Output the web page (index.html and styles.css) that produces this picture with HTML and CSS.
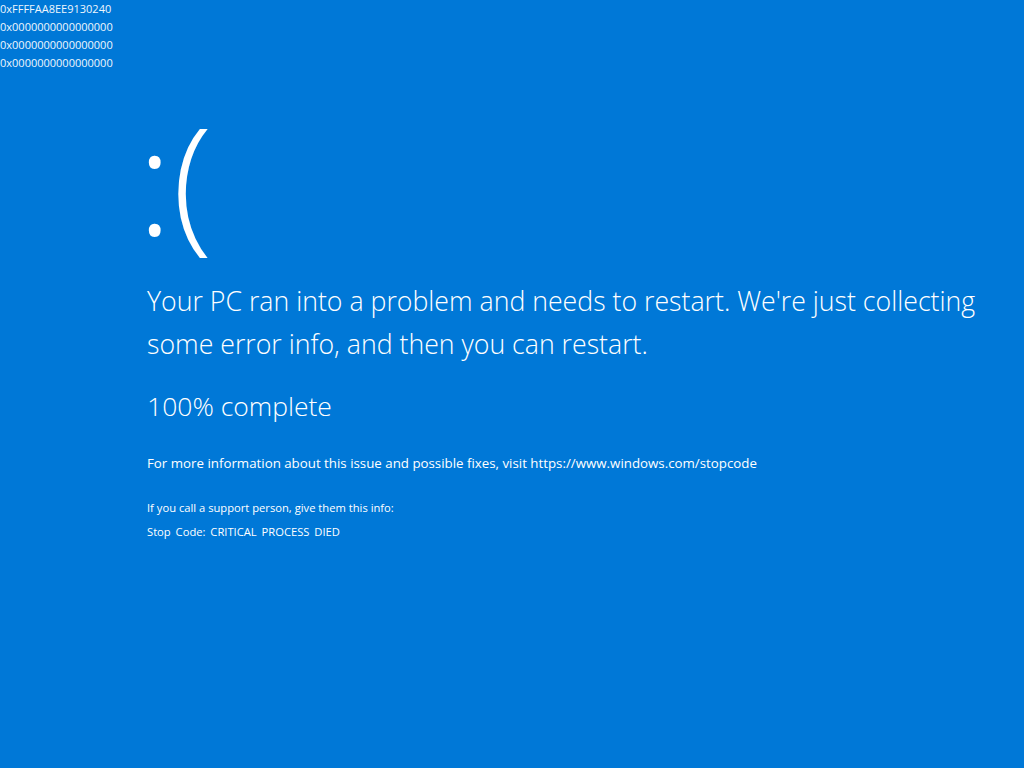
FILE: index.html
```html
<!DOCTYPE html>
<html>
<head>
<meta charset="utf-8">
<link rel="stylesheet" href="styles.css">
</head>
<body>
<div class="screen">
  <div class="hex">
    <div>0xFFFFAA8EE9130240</div>
    <div>0x0000000000000000</div>
    <div>0x0000000000000000</div>
    <div>0x0000000000000000</div>
  </div>
  <div class="content">
    <div class="face">:(</div>
    <p class="headline">Your PC ran into a problem and needs to restart. We're just collecting some error info, and then you can restart.</p>
    <p class="progress">100% complete</p>
    <p class="more">For more information about this issue and possible fixes, visit https://www.windows.com/stopcode</p>
    <p class="support">If you call a support person, give them this info:</p>
    <p class="code">Stop Code: CRITICAL PROCESS DIED</p>
  </div>
</div>
</body>
</html>
```
FILE: styles.css
```css
html, body {
  margin: 0;
  padding: 0;
  background: #0078d7;
}
.screen {
  width: 1024px;
  height: 768px;
  background: #0078d7;
  color: #ffffff;
  font-family: "Open Sans", "Noto Sans", sans-serif;
  font-weight: 300;
  overflow: hidden;
}
.hex {
  font-size: 11px;
  line-height: 18px;
  color: #eef6fd;
  font-weight: 400;
  letter-spacing: 0;
}
.content {
  padding-left: 147px;
  padding-top: 31px;
}
.face {
  font-size: 148px;
  line-height: 150px;
  margin-left: -10px;
  height: 176px;
}
.content p {
  margin: 0;
}
.headline {
  font-size: 26.7px;
  line-height: 43px;
  width: 860px;
}
.progress {
  font-size: 26.5px;
  line-height: 43px;
  margin-top: 20px !important;
}
.more {
  font-size: 13.3px;
  line-height: 20px;
  margin-top: 25px !important;
  font-weight: 400;
}
.support {
  font-size: 11.2px;
  line-height: 20px;
  margin-top: 25px !important;
  font-weight: 400;
}
.code {
  font-size: 11.2px;
  line-height: 20px;
  margin-top: 4px !important;
  font-weight: 400;
  word-spacing: 2px;
}
```
